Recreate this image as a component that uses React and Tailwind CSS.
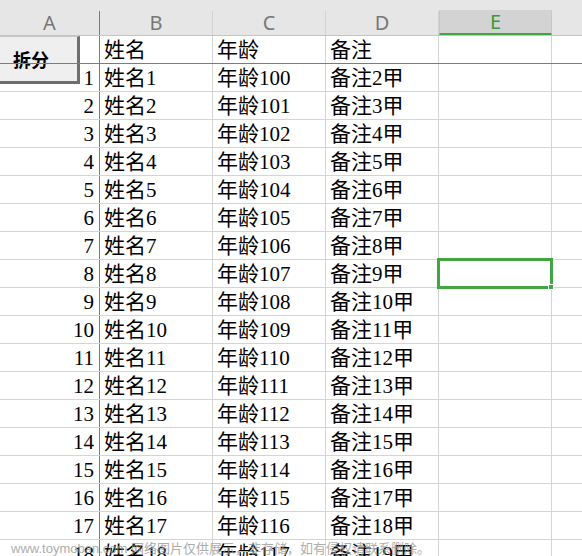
import React from 'react'

const ROWS = Array.from({ length: 18 }, (_, i) => i + 1)

const cellFont = { fontFamily: '"Liberation Serif", "Noto Sans CJK SC", serif' }

// Header strip with column letters; column E is the active one
function ColumnHeader() {
  return (
    <div className="flex h-[36px] border-b border-[#c4c4c4] bg-[#e6e6e6]">
      <div className="flex w-[100px] shrink-0 flex-col">
        <div className="h-[11px]" />
        <div className="flex h-[24px] items-center justify-center border-r border-[#41a541] text-[20px] text-[#777]">A</div>
      </div>
      {['B', 'C', 'D'].map((c) => (
        <div key={c} className="flex w-[113px] shrink-0 flex-col">
          <div className="h-[11px]" />
          <div className="flex h-[24px] items-center justify-center border-r border-[#d2d2d2] text-[20px] text-[#777]">{c}</div>
        </div>
      ))}
      <div className="flex w-[113px] shrink-0 flex-col">
        <div className="h-[11px]" />
        <div className="flex h-[25px] items-center justify-center border-x border-b-2 border-x-[#c8c8c8] border-b-[#41a541] bg-[#d3d3d3] text-[20px] text-[#3a9a3a]">E</div>
      </div>
      <div className="flex-1" />
    </div>
  )
}

function Row({ num, b, c, d, last }) {
  return (
    <div className={`flex h-[28px] border-b ${last ? 'border-[#41a541]' : 'border-[#d4d4d4]'} text-[21px] leading-[28px] text-black`} style={cellFont}>
      <div className="w-[100px] shrink-0 border-r border-[#41a541] pr-[5px] text-right">{num}</div>
      <div className="w-[113px] shrink-0 overflow-hidden whitespace-nowrap border-r border-[#d4d4d4] pl-[4px]">{b}</div>
      <div className="w-[113px] shrink-0 overflow-hidden whitespace-nowrap border-r border-[#d4d4d4] pl-[4px]">{c}</div>
      <div className="w-[113px] shrink-0 overflow-hidden whitespace-nowrap border-r border-[#d4d4d4] pl-[4px]">{d}</div>
      <div className="w-[113px] shrink-0 border-r border-[#d4d4d4]" />
      <div className="flex-1" />
    </div>
  )
}

export default function App() {
  return (
    <div className="relative h-[556px] w-[582px] overflow-hidden bg-white">
      <ColumnHeader />
      <Row num="" b="姓名" c="年龄" d="备注" last />
      {ROWS.map((n) => (
        <Row key={n} num={n} b={`姓名${n}`} c={`年龄${n + 99}`} d={`备注${n + 1}甲`} />
      ))}

      {/* floating button object */}
      <div
        className="absolute left-0 top-[36px] flex h-[48px] w-[80px] items-center border-t border-[#c9c9c9] border-r-[3px] border-b-[3px] border-r-[#6e6e6e] border-b-[#6e6e6e] bg-[#efefef] pl-[13px] text-[18px] font-bold text-black"
        style={{ fontFamily: '"Noto Sans CJK SC", sans-serif' }}
      >
        拆分
      </div>
      {/* freeze line drawn over the button */}
      <div className="absolute left-0 top-[63px] h-px w-[100px] bg-[#41a541]" />

      {/* active cell E8 */}
      <div className="absolute left-[437px] top-[258px] h-[31px] w-[116px] border-[3px] border-[#41a541]" />
      <div className="absolute left-[548px] top-[284px] h-[6px] w-[6px] border border-white bg-[#41a541]" />

      <div
        className="absolute left-[11px] top-[539px] whitespace-nowrap text-[13px] text-[#9a9a9a] opacity-80"
        style={{ fontFamily: '"Liberation Sans", "Noto Sans CJK SC", sans-serif' }}
      >
        www.toymoban.com 网络图片仅供展示，非存储，如有侵权请联系删除。
      </div>
    </div>
  )
}
